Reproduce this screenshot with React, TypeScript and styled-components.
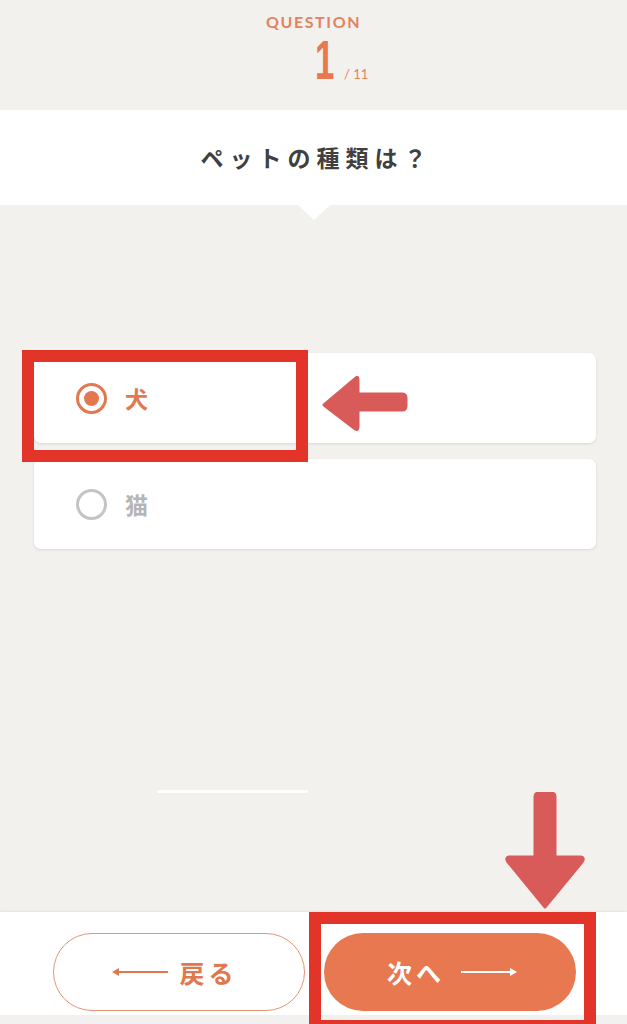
import styled, { createGlobalStyle } from 'styled-components'

const GlobalStyle = createGlobalStyle`
  html, body {
    margin: 0;
    padding: 0;
    background: #f3f1ee;
  }
  * {
    box-sizing: border-box;
  }
`

const jp = `'Noto Sans CJK JP', 'Noto Sans', sans-serif`

const options = [
  { label: '犬', checked: true },
  { label: '猫', checked: false },
]

const LineArrow = ({ dir, color }: { dir: 'left' | 'right'; color: string }) => (
  <svg width="56" height="10" viewBox="0 0 56 10">
    {dir === 'left' ? (
      <>
        <line x1="3" y1="5" x2="56" y2="5" stroke={color} strokeWidth="2" />
        <path d="M0 5 L7 1 L7 9 Z" fill={color} />
      </>
    ) : (
      <>
        <line x1="0" y1="5" x2="53" y2="5" stroke={color} strokeWidth="2" />
        <path d="M56 5 L49 1 L49 9 Z" fill={color} />
      </>
    )}
  </svg>
)

export default function App() {
  return (
    <>
      <GlobalStyle />
      <Page>
        <Header>
          <Eyebrow>QUESTION</Eyebrow>
          <Counter>
            <Current>1</Current>
            <Total>/ 11</Total>
          </Counter>
        </Header>

        <QuestionBand>
          <QuestionText>ペットの種類は？</QuestionText>
        </QuestionBand>

        <Body>
          <OptionList>
            {options.map((o) => (
              <OptionCard key={o.label}>
                <Radio $checked={o.checked} />
                <OptionLabel $checked={o.checked}>{o.label}</OptionLabel>
              </OptionCard>
            ))}
          </OptionList>
          <ProgressTrack>
            <ProgressFill style={{ width: `${(1 / 2) * 100}%` }} />
          </ProgressTrack>
        </Body>

        <Footer>
          <BackButton>
            <LineArrow dir="left" color="#e0784f" />
            <span>戻る</span>
          </BackButton>
          <NextButton>
            <span>次へ</span>
            <LineArrow dir="right" color="#ffffff" />
          </NextButton>
        </Footer>
        <BottomStrip />

        <HighlightBox $top={350} $left={22} $width={286} $height={112} />
        <HighlightBox $top={912} $left={309} $width={287} $height={120} />

        <PointerLeft width="90" height="60" viewBox="0 0 90 60">
          <path
            d="M36 3 Q38 1 38 5 L38 19 L82 19 Q86 19 86 23 L86 31 Q86 35 82 35 L38 35 L38 51 Q38 57 34 53 L4 30 Z"
            fill="#d95b59"
            stroke="#d95b59"
            strokeWidth="3"
            strokeLinejoin="round"
          />
        </PointerLeft>
        <PointerDown width="84" height="120" viewBox="0 0 84 120">
          <path
            d="M32 5 Q32 1 36 1 L48 1 Q52 1 52 5 L52 65 L78 65 Q82 66 79 70 L42 115 L5 70 Q2 66 6 65 L32 65 Z"
            fill="#d95b59"
            stroke="#d95b59"
            strokeWidth="3"
            strokeLinejoin="round"
          />
        </PointerDown>
      </Page>
    </>
  )
}

const Page = styled.div`
  position: relative;
  width: 627px;
  height: 1024px;
  overflow: hidden;
  display: flex;
  flex-direction: column;
  background: #f3f1ee;
`

const Header = styled.header`
  height: 110px;
  display: flex;
  flex-direction: column;
  align-items: center;
  padding-top: 12px;
`

const Eyebrow = styled.div`
  font-family: Lato, 'Liberation Sans', sans-serif;
  font-weight: 700;
  font-size: 16px;
  letter-spacing: 1.6px;
  line-height: 20px;
  color: #e2825f;
`

const Counter = styled.div`
  display: flex;
  align-items: baseline;
  gap: 4px;
  margin-top: 0;
  padding-left: 50px;
`

const Current = styled.span`
  display: inline-block;
  transform: scaleX(0.62);
  font-family: 'Liberation Sans', sans-serif;
  font-weight: 700;
  font-size: 56px;
  line-height: 56px;
  color: #e8784f;
`

const Total = styled.span`
  font-family: Lato, 'Liberation Sans', sans-serif;
  font-weight: 400;
  font-size: 13px;
  color: #e2825f;
`

const QuestionBand = styled.section`
  position: relative;
  height: 95px;
  background: #ffffff;
  display: flex;
  align-items: center;
  justify-content: center;
  padding-bottom: 2px;

  &::after {
    content: '';
    position: absolute;
    left: 50%;
    bottom: -15px;
    transform: translateX(-50%);
    border-left: 16px solid transparent;
    border-right: 16px solid transparent;
    border-top: 15px solid #ffffff;
  }
`

const QuestionText = styled.h1`
  margin: 0 0 0 6px;
  font-family: ${jp};
  font-weight: 700;
  font-size: 23px;
  letter-spacing: 6px;
  color: #404040;
`

const Body = styled.main`
  flex: 1;
  display: flex;
  flex-direction: column;
  padding: 148px 31px 0 34px;
`

const OptionList = styled.div`
  display: flex;
  flex-direction: column;
  gap: 16px;
`

const OptionCard = styled.label`
  height: 90px;
  display: flex;
  align-items: center;
  gap: 18px;
  padding-left: 42px;
  background: #ffffff;
  border-radius: 7px;
  box-shadow: 0 1px 3px rgba(0, 0, 0, 0.1);
`

const Radio = styled.span<{ $checked: boolean }>`
  width: 31px;
  height: 31px;
  border-radius: 50%;
  border: 3px solid ${(p) => (p.$checked ? '#e2784f' : '#c4c4c4')};
  display: flex;
  align-items: center;
  justify-content: center;

  &::after {
    content: '';
    width: 15px;
    height: 15px;
    border-radius: 50%;
    background: #e2784f;
    display: ${(p) => (p.$checked ? 'block' : 'none')};
  }
`

const OptionLabel = styled.span<{ $checked: boolean }>`
  font-family: ${jp};
  font-weight: 700;
  font-size: 23px;
  color: ${(p) => (p.$checked ? '#e2784f' : '#b5b5b5')};
`

const ProgressTrack = styled.div`
  margin: 241px 0 0 123px;
  width: 302px;
  height: 3px;
`

const ProgressFill = styled.div`
  height: 100%;
  background: #ffffff;
  border-radius: 2px;
`

const Footer = styled.footer`
  height: 103px;
  background: #ffffff;
  display: flex;
  gap: 19px;
  padding: 21px 0 0 53px;
  box-shadow: 0 -1px 2px rgba(0, 0, 0, 0.06);
  z-index: 1;
`

const PillButton = styled.button`
  width: 252px;
  height: 78px;
  border-radius: 39px;
  display: flex;
  align-items: center;
  justify-content: center;
  gap: 11px;
  font-family: ${jp};
  font-weight: 700;
  font-size: 25px;
  letter-spacing: 4px;
  cursor: pointer;
`

const BackButton = styled(PillButton)`
  background: #ffffff;
  border: 1.5px solid #e39477;
  color: #e0784f;
  padding-right: 14px;
`

const NextButton = styled(PillButton)`
  background: #e8784f;
  border: none;
  color: #ffffff;
  gap: 16px;
  padding-left: 10px;
`

const BottomStrip = styled.div`
  height: 9px;
  background: #f2f1ef;
`

const HighlightBox = styled.div<{ $top: number; $left: number; $width: number; $height: number }>`
  position: absolute;
  top: ${(p) => p.$top}px;
  left: ${(p) => p.$left}px;
  width: ${(p) => p.$width}px;
  height: ${(p) => p.$height}px;
  border: 12px solid #e3342a;
  z-index: 2;
  pointer-events: none;
`

const PointerLeft = styled.svg`
  position: absolute;
  top: 375px;
  left: 320px;
  z-index: 2;
`

const PointerDown = styled.svg`
  position: absolute;
  top: 792px;
  left: 503px;
  z-index: 2;
`
